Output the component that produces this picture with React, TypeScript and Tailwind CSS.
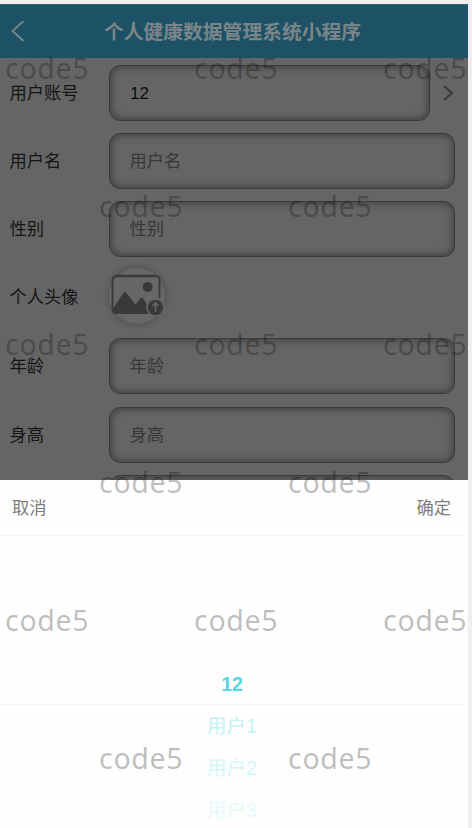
type FieldProps = { label: string; text?: string; filled?: boolean; picker?: boolean; top: string };

function Field({ label, text, filled, picker, top }: FieldProps) {
  return (
    <div className={`flex shrink-0 items-center pr-[13px] pl-[9.5px] ${top}`}>
      <span className="w-[99.5px] shrink-0 pt-[2px] text-[17.3px] text-[#151515]">{label}</span>
      <div className="flex h-[56px] flex-1 items-center rounded-[11px] border border-[#3a3a3a] pl-[19.5px] shadow-[inset_0_0_9px_0_rgba(0,0,0,0.5)]">
        <span className={filled ? "pt-[2px] pl-[0.5px] text-[17px] text-[#0c0c0c]" : "pt-[2px] text-[17.3px] text-[#383838]"}>{text}</span>
      </div>
      {picker && (
        <svg className="ml-[12px] h-[18px] w-[13px]" viewBox="0 0 13 18" fill="none" stroke="#393939" strokeWidth="2">
          <path d="M2 2 10 9 2 16" />
        </svg>
      )}
    </div>
  );
}

function Avatar() {
  return (
    <svg className="h-[56px] w-[56px] overflow-visible rounded-full shadow-[0_0_7px_0_rgba(0,0,0,0.3)]" viewBox="0 0 56 56">
      <circle cx="28" cy="28" r="27.5" fill="#676767" />
      <path d="M7 8H47" fill="none" stroke="#393939" strokeWidth="2.6" />
      <path d="M3.5 42V13Q3.5 8.500 7 8M47 8Q50.5 8.500 50.5 12V30" fill="none" stroke="#3c3c3c" strokeWidth="2" />
      <path d="M3 42 14 25.5Q16 22.5 18 25.5L26.500 36.500 31.500 30.500Q33 28.500 34.500 31L44 46H7Q3 46 3 42Z" fill="#393939" />
      <circle cx="38.700" cy="19" r="5" fill="#393939" />
      <circle cx="46.500" cy="39.500" r="9.500" fill="#656565" />
      <circle cx="46.500" cy="39.500" r="7.700" fill="#393939" />
      <path d="M46.500 44V35.500M43.500 38 46.500 35 49.500 38" fill="none" stroke="#666" strokeWidth="1.700" />
    </svg>
  );
}

function WatermarkRow({ shifted }: { shifted?: boolean }) {
  return (
    <div className={`flex h-[138px] ${shifted ? "pl-[99px]" : "pl-[5px]"}`}>
      {(shifted ? [0, 1] : [0, 1, 2]).map((item) => (
        <span
          key={item}
          className="w-[189px] shrink-0 font-['Noto_Sans','Open_Sans',sans-serif] text-[28.5px] leading-[40px] tracking-[0.7px] text-black/[0.26]"
        >
          code5
        </span>
      ))}
    </div>
  );
}

export default function App() {
  return (
    <div className="relative h-[828px] w-[472px] overflow-hidden bg-[#eeeeee] pt-[4px] font-['Liberation_Sans','Noto_Sans_CJK_SC',sans-serif]">
      <div className="flex h-[824px] w-[468px] flex-col overflow-hidden bg-[#656565]">
        <header className="flex h-[54px] shrink-0 items-center border-t border-[#39616f] bg-[#1c5166] pl-[10px]">
          <svg className="h-[22px] w-[16px] shrink-0" viewBox="0 0 16 22" fill="none" stroke="#7d898d" strokeWidth="1.700">
            <path d="M13.500 0 2.500 10 13.500 20" />
          </svg>
          <h1 className="flex-1 pr-[29px] text-center text-[19.800px] leading-[28px] font-bold text-[#7b8588]">
            个人健康数据管理系统小程序
          </h1>
        </header>

        <main className="flex h-[422px] shrink-0 flex-col overflow-hidden pt-[7px]">
          <Field label="用户账号" text="12" filled picker top="mt-0" />
          <Field label="用户名" text="用户名" top="mt-[12px]" />
          <Field label="性别" text="性别" top="mt-[12px]" />
          <div className="mt-[11px] flex h-[56px] shrink-0 items-center pl-[9.5px]">
            <span className="w-[99.5px] shrink-0 pt-[4px] text-[17.3px] text-[#151515]">个人头像</span>
            <Avatar />
          </div>
          <Field label="年龄" text="年龄" top="mt-[14px]" />
          <Field label="身高" text="身高" top="mt-[13px]" />
          <Field label="" top="mt-[12px]" />
        </main>

        <section className="flex flex-1 flex-col bg-[#fefefe]">
          <div className="flex h-[56px] shrink-0 items-center justify-between border-b border-[#f5f5f5] pt-[3px] pr-[17px] pl-[12px] text-[17.3px] text-[#7d7d7d]">
            <button>取消</button>
            <button>确定</button>
          </div>
          <div className="flex flex-col items-center pt-[126px] text-[19.500px]">
            <div className="flex h-[43px] w-full items-center justify-center border-b border-[#f5f5f8] pt-[3px] pr-[4px] font-bold text-[#55d8e3]">12</div>
            <div className="flex h-[42px] items-center pt-[1px] pr-[4px] text-[#c4f2f5]">用户1</div>
            <div className="flex h-[42px] items-center pt-[1px] pr-[4px] text-[#d5f6f8]">用户2</div>
            <div className="flex h-[42px] items-center pt-[1px] pr-[4px] text-[#e5fafb]">用户3</div>
          </div>
        </section>
      </div>

      <div className="pointer-events-none absolute inset-0 overflow-hidden pt-[48px]" aria-hidden="true">
        <WatermarkRow />
        <WatermarkRow shifted />
        <WatermarkRow />
        <WatermarkRow shifted />
        <WatermarkRow />
        <WatermarkRow shifted />
      </div>
    </div>
  );
}
